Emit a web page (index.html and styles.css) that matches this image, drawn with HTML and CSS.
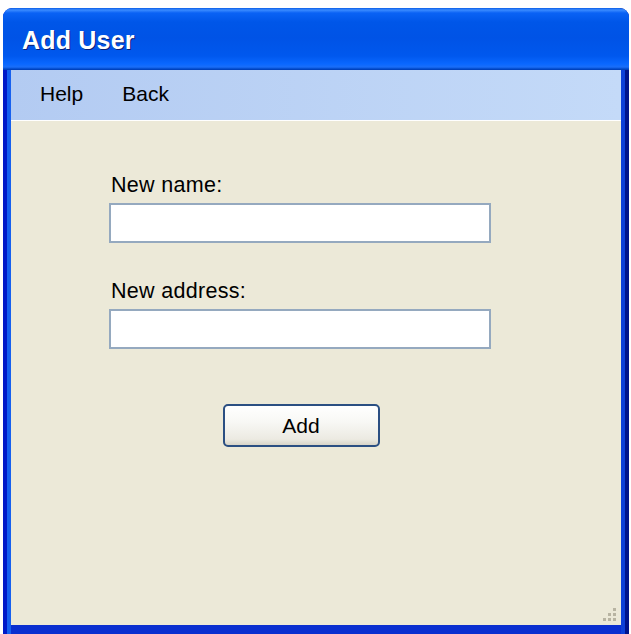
FILE: index.html
```html
<!DOCTYPE html>
<html>
<head>
<meta charset="utf-8">
<title>Add User</title>
<link rel="stylesheet" href="styles.css">
</head>
<body>
<div class="window">
  <div class="titlebar"><span class="title">Add User</span></div>
  <div class="frame">
    <div class="menubar">
      <span class="menu-item">Help</span>
      <span class="menu-item">Back</span>
    </div>
    <div class="content">
      <div class="form">
        <label class="field">
          <span class="label">New name:</span>
          <input class="textbox" type="text">
        </label>
        <label class="field">
          <span class="label">New address:</span>
          <input class="textbox" type="text">
        </label>
        <div class="actions">
          <button class="button" type="button">Add</button>
        </div>
      </div>
      <div class="grip">
        <svg width="14" height="14" viewBox="0 0 14 14">
          <g fill="#b8b4a2">
            <rect x="10" y="0" width="3" height="3"/>
            <rect x="5" y="5" width="3" height="3"/>
            <rect x="10" y="5" width="3" height="3"/>
            <rect x="0" y="10" width="3" height="3"/>
            <rect x="5" y="10" width="3" height="3"/>
            <rect x="10" y="10" width="3" height="3"/>
          </g>
        </svg>
      </div>
    </div>
  </div>
</div>
</body>
</html>
```
FILE: styles.css
```css
html, body {
  margin: 0;
  padding: 0;
  background: #ffffff;
}
body {
  padding: 8px 2px 0 3px;
  height: 634px;
  box-sizing: border-box;
  overflow: hidden;
  font-family: "Liberation Sans", Arial, sans-serif;
}
.window {
  width: 626px;
  height: 640px;
  display: flex;
  flex-direction: column;
  border-radius: 9px 9px 0 0;
  overflow: hidden;
  background: linear-gradient(to right, #0019c8, #0019c8 50%, #001290);
}
.titlebar {
  height: 62px;
  flex: none;
  display: flex;
  align-items: center;
  padding-left: 19px;
  padding-top: 2px;
  box-sizing: border-box;
  background: linear-gradient(to bottom,
    #0a5de8 0px, #3b8bff 2px, #0a62f5 5px, #0056e8 14px, #0053e6 30px,
    #0058ee 48px, #0a68ff 56px, #1a6ef8 59px, #0048c8 61px, #003bb0 62px);
}
.title {
  color: #ffffff;
  font-family: "Liberation Sans", Arial, sans-serif;
  font-weight: bold;
  font-size: 25px;
  letter-spacing: 0.2px;
  text-shadow: 1px 1px 0 #0a1e78;
}
.frame {
  flex: 1;
  display: flex;
  flex-direction: column;
  border-left: 4px solid #1660ef;
  border-right: 4px solid #0d3fd8;
  margin: 0 4px 0 4px;
  background: #ece9d8;
  box-shadow: -4px 0 0 #0019c8, 4px 0 0 #00138c;
}
.menubar {
  height: 50px;
  flex: none;
  display: flex;
  align-items: center;
  gap: 39px;
  padding-left: 29px;
  padding-bottom: 2px;
  box-sizing: border-box;
  background: linear-gradient(to right, #b3cbf2, #c4daf8);
}
.menu-item {
  font-size: 21px;
  color: #000000;
}
.content {
  height: 505px;
  flex: none;
  position: relative;
  background: #ece9d8;
  border-bottom: 9px solid #0a2fd0;
  box-shadow: 0 1px 0 #ffffff inset;
}
.form {
  display: flex;
  flex-direction: column;
  padding: 53px 0 0 98px;
  gap: 36px;
}
.field {
  display: flex;
  flex-direction: column;
  gap: 6px;
}
.label {
  font-size: 21.5px;
  line-height: 24px;
  letter-spacing: 0.3px;
  color: #000000;
  padding-left: 2px;
}
.textbox {
  width: 382px;
  height: 40px;
  box-sizing: border-box;
  border: 2px solid #95a9bf;
  background: #ffffff;
  margin: 0;
  outline: none;
}
.actions {
  width: 382px;
  display: flex;
  justify-content: center;
  padding-top: 19px;
}
.button {
  width: 157px;
  height: 43px;
  margin-left: 2px;
  border: 2px solid #2b4f82;
  border-radius: 5px;
  background: linear-gradient(to bottom, #ffffff 0%, #f8f8f5 40%, #eceae2 85%, #d8d5c8 100%);
  font-family: "Liberation Sans", Arial, sans-serif;
  font-size: 21px;
  color: #000000;
  padding: 0;
}
.grip {
  position: absolute;
  right: 4px;
  bottom: 3px;
  width: 14px;
  height: 14px;
}
```
